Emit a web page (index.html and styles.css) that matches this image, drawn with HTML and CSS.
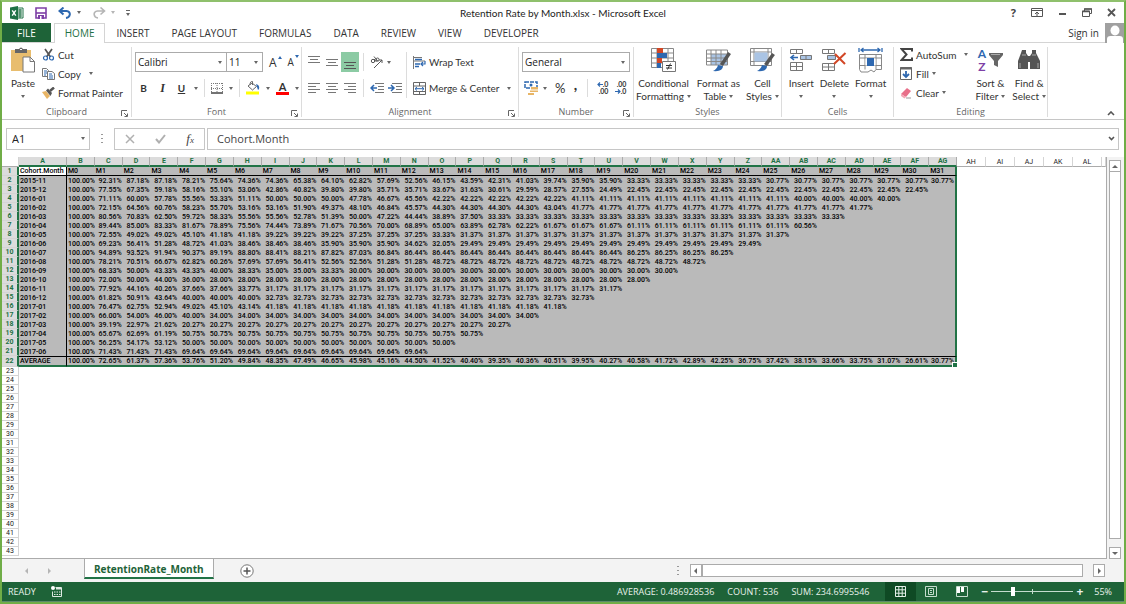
FILE: index.html
```html
<!DOCTYPE html>
<html lang="en">
<head>
  <meta charset="UTF-8">
  <meta name="viewport" content="width=device-width, initial-scale=1.0">
  <title>Retention Rate by Month.xlsx - Microsoft Excel</title>
  <link rel="stylesheet" href="styles.css">
</head>
<body>
  <div class="window">
    <header class="titlebar">
      <div class="quick-access">
        <svg width="14" height="14" viewBox="0 0 14 14"><path d="M7 2h6v10H7z" fill="#fff" stroke="#217346"/><path d="M8 4h4M8 6h4M8 8h4M8 10h4M10 3v9" stroke="#217346"/><path d="M0 1.500 8 0v14l-8-1.500z" fill="#1e7145"/><path d="m2.200 4.300 3.600 5.400M5.800 4.300 2.200 9.700" stroke="#fff" stroke-width="1.400"/></svg>
        <button aria-label="Save"><svg width="12" height="12" viewBox="0 0 12 12"><path d="M1 1h10v10H1z" fill="#fff" stroke="#7d3fa6" stroke-width="1.600"/><path d="M1 6h10" stroke="#7d3fa6" stroke-width="1.600"/><path d="M3 8h6v4H3z" fill="#7d3fa6"/><path d="M5 9h1.500v3H5z" fill="#fff"/></svg></button>
        <button aria-label="Undo"><svg width="14" height="12" viewBox="0 0 14 12"><path d="M5.500.500 1.500 4l4 3.500M2 4h6.500c5 .5 4 6.500-.5 7" fill="none" stroke="#2e68b0" stroke-width="2"/></svg><i class="arrow"></i></button>
        <button aria-label="Redo"><svg width="14" height="12" viewBox="0 0 14 12"><path d="m8.500.500 4 3.500-4 3.500M12 4H5.500C.5 4.500 1.500 10.500 6 11" fill="none" stroke="#b5b5b5" stroke-width="1.600"/></svg><i class="arrow faded"></i></button>
        <button class="customize" aria-label="Customize"><i class="arrow"></i></button>
      </div>
      <h1>Retention Rate by Month.xlsx - Microsoft Excel</h1>
      <div class="window-buttons">
        <button aria-label="Help"><b>?</b></button>
        <button aria-label="Ribbon display options"><svg width="12" height="9" viewBox="0 0 12 9"><path d="M.500.500h11v8H.500zM.500 2.500h11M6 8V4M4 6l2-2 2 2" fill="none" stroke="#555"/></svg></button>
        <button aria-label="Minimize"><svg width="9" height="9" viewBox="0 0 9 9"><path d="M1 6h7" stroke="#555" stroke-width="2"/></svg></button>
        <button aria-label="Restore"><svg width="10" height="9" viewBox="0 0 10 9"><path d="M2.500 3V1h7v4.500H7.500M.500 3h7v5.500h-7z" fill="none" stroke="#555"/><path d="M2 1h8M0 3.500h8" stroke="#555" stroke-width="1.500"/></svg></button>
        <button aria-label="Close"><svg width="9" height="9" viewBox="0 0 9 9"><path d="m1 1 7 7M8 1 1 8" stroke="#555" stroke-width="1.800"/></svg></button>
      </div>
    </header>

    <nav class="tabs">
      <a class="tab file" href="#">FILE</a>
      <a class="tab active" href="#">HOME</a>
      <a class="tab" href="#">INSERT</a>
      <a class="tab" href="#">PAGE LAYOUT</a>
      <a class="tab" href="#">FORMULAS</a>
      <a class="tab" href="#">DATA</a>
      <a class="tab" href="#">REVIEW</a>
      <a class="tab" href="#">VIEW</a>
      <a class="tab" href="#">DEVELOPER</a>
      <a class="sign-in" href="#">Sign in
        <svg width="19" height="20" viewBox="0 0 19 20"><path d="M0 0h19v20H0z" fill="#a0a0a0"/><ellipse cx="10" cy="7.500" rx="4.500" ry="5" fill="#fff"/><path d="M2 20v-4q0-3 3.500-3h9q3.500 0 3.500 3v4z" fill="#fff"/></svg>
      </a>
    </nav>

    <section class="ribbon">
      <div class="group clipboard">
        <div class="group-body">
          <button class="big">
            <svg width="24" height="26" viewBox="0 0 24 26"><path d="M0 3h20v21H0z" fill="#e8bd6e"/><path d="M4 2h4q2-3 4 0h4v4H4z" fill="#666"/><path d="M9 2h2v1H9z" fill="#fff"/><path d="M12 10h7l4.500 4.500V25H12z" fill="#fff" stroke="#777"/><path d="M19 10v4.500h4.500" fill="none" stroke="#777"/></svg>
            <span>Paste</span><i class="arrow"></i>
          </button>
          <div class="stack">
            <button><svg width="13" height="13" viewBox="0 0 13 13"><path d="m3 1 5.500 8M10 1 4.500 9" stroke="#555" stroke-width="1.700"/><circle cx="3.500" cy="10" r="2" fill="none" stroke="#2e68b0" stroke-width="1.200"/><circle cx="9.500" cy="10" r="2" fill="none" stroke="#2e68b0" stroke-width="1.200"/></svg>Cut</button>
            <button><svg width="13" height="12" viewBox="0 0 13 12"><path d="M.500.500h4l2 2v6h-6z" fill="#fff" stroke="#777"/><path d="M2 3h3M2 5h3M2 7h2" stroke="#2e68b0"/><path d="M5.500 3.500h4.500l2.500 2v6h-7z" fill="#fff" stroke="#777"/><path d="M7 6h3M7 8h4M7 10h4" stroke="#2e68b0"/></svg>Copy<i class="arrow spaced"></i></button>
            <button><svg width="13" height="12" viewBox="0 0 13 12"><path d="m0 5 4-1 4 5-3 3z" fill="#e8b566"/><path d="m4 3.500 2-2 4 4.500-1.500 3z" fill="#555"/><path d="m8 4 4-3.500" stroke="#555" stroke-width="2.500"/></svg>Format Painter</button>
          </div>
        </div>
        <footer>Clipboard<svg class="launcher" width="7" height="7" viewBox="0 0 7 7"><path d="M.500 6V.500H6M3 3l3 3M6.500 3.500v3h-3" fill="none" stroke="#666"/></svg></footer>
      </div>

      <div class="group font">
        <div class="group-body rows">
          <div class="row">
            <label class="combo font-name"><select aria-label="Font"><option>Calibri</option></select></label><label class="combo font-size"><select aria-label="Font size"><option>11</option></select></label>
            <button class="grow" aria-label="Increase font size">A<i class="mark up"></i></button>
            <button class="shrink" aria-label="Decrease font size">A<i class="mark down"></i></button>
          </div>
          <div class="row">
            <button class="letter"><b>B</b></button>
            <button class="letter"><em>I</em></button>
            <button class="letter"><u>U</u></button><i class="arrow"></i>
            <i class="divider"></i>
            <button aria-label="Borders"><svg width="12" height="11" viewBox="0 0 12 11"><path d="M.500 0v10M11.500 0v10M6 0v10M0 .500h12M0 5.500h12" stroke="#777" stroke-dasharray="1 1"/><path d="M0 10h12" stroke="#444" stroke-width="1.500"/></svg></button><i class="arrow"></i>
            <i class="divider"></i>
            <button aria-label="Fill color"><svg width="14" height="14" viewBox="0 0 14 14"><path d="m2 5 4-3 4.500 3.500L6.500 9z" fill="#fff" stroke="#666"/><path d="M4 4q0-4 2.500-3.500V4" fill="none" stroke="#666"/><path d="M10 3q4 1 3 5l-1 1-1-3z" fill="#2e68b0"/><path d="M0 10.500h13v3H0z" fill="#ffff00"/></svg></button><i class="arrow"></i>
            <button class="font-color" aria-label="Font color"><b>A</b></button><i class="arrow"></i>
          </div>
        </div>
        <footer>Font<svg class="launcher" width="7" height="7" viewBox="0 0 7 7"><path d="M.500 6V.500H6M3 3l3 3M6.500 3.500v3h-3" fill="none" stroke="#666"/></svg></footer>
      </div>

      <div class="group alignment">
        <div class="group-body">
          <div class="align-grid">
            <button aria-label="Top align"><svg width="12" height="14" viewBox="0 0 12 14"><path d="M0 1.500h12M2 4.500h8M0 7.500h12" stroke="#777"/></svg></button>
            <button aria-label="Middle align"><svg width="12" height="14" viewBox="0 0 12 14"><path d="M0 4.500h12M2 7.500h8M0 10.500h12" stroke="#777"/></svg></button>
            <button class="pressed" aria-label="Bottom align"><svg width="12" height="14" viewBox="0 0 12 14"><path d="M0 7.500h12M2 10.500h8M0 13.500h12" stroke="#555"/></svg></button>
            <i class="divider"></i>
            <button class="wide" aria-label="Orientation"><svg width="13" height="13" viewBox="0 0 13 13"><circle cx="3" cy="5" r="1.700" fill="none" stroke="#555"/><path d="m4 3 2.500 3M4 .500l4 5" stroke="#555"/><circle cx="7.500" cy="3.500" r="1.500" fill="none" stroke="#555"/><path d="m4 12 8-8M9 4h3v3" fill="none" stroke="#555"/></svg><i class="arrow"></i></button>
            <button aria-label="Align left"><svg width="12" height="11" viewBox="0 0 12 11"><path d="M0 .500h12M0 3.500h8M0 6.500h12M0 9.500h8" stroke="#777"/></svg></button>
            <button aria-label="Center"><svg width="12" height="11" viewBox="0 0 12 11"><path d="M0 .500h12M2 3.500h8M0 6.500h12M2 9.500h8" stroke="#777"/></svg></button>
            <button aria-label="Align right"><svg width="12" height="11" viewBox="0 0 12 11"><path d="M0 .500h12M4 3.500h8M0 6.500h12M4 9.500h8" stroke="#777"/></svg></button>
            <i class="divider"></i>
            <button aria-label="Decrease indent"><svg width="14" height="10" viewBox="0 0 14 10"><path d="M5 .500h9M8 3.500h6M8 6.500h6M5 9.500h9" stroke="#777"/><path d="M7 5H2M4 2 1 5l3 3" fill="none" stroke="#2e68b0" stroke-width="1.500"/></svg></button>
            <button aria-label="Increase indent"><svg width="14" height="10" viewBox="0 0 14 10"><path d="M4 .500h10M8 3.500h6M8 6.500h6M4 9.500h10" stroke="#777"/><path d="M0 5h5M3 2l3 3-3 3" fill="none" stroke="#2e68b0" stroke-width="1.500"/></svg></button>
          </div>
          <i class="divider tall"></i>
          <div class="wrap-stack">
            <button><svg width="13" height="13" viewBox="0 0 13 13"><path d="M.500 0v13M1 1.500h8M1 5h11" stroke="#777"/><path d="M2 3.500h7M2 8h5M2 10.500h4" stroke="#2e68b0" stroke-width="1.400"/><path d="M12 5v3H8M10 6 8 8l2 2" fill="none" stroke="#2e68b0" stroke-width="1.200"/></svg>Wrap Text</button>
            <button><svg width="13" height="13" viewBox="0 0 13 13"><path d="M.500.500h12v12H.500zM.500 4h12M.500 9.500h12M6.500.500V4M6.500 9.500v3" fill="none" stroke="#666"/><path d="M2 6.700h9M4 5 2 6.700 4 8.500M9 5l2 1.700L9 8.500" fill="none" stroke="#2e68b0"/></svg>Merge &amp; Center<i class="arrow spaced"></i></button>
          </div>
        </div>
        <footer>Alignment<svg class="launcher" width="7" height="7" viewBox="0 0 7 7"><path d="M.500 6V.500H6M3 3l3 3M6.500 3.500v3h-3" fill="none" stroke="#666"/></svg></footer>
      </div>

      <div class="group number">
        <div class="group-body rows">
          <div class="row"><label class="combo format"><select aria-label="Number format"><option>General</option></select></label></div>
          <div class="row number-row">
            <button aria-label="Accounting format"><svg width="15" height="14" viewBox="0 0 15 14"><path d="M1 1h12v6H1z" fill="#fff" stroke="#2e68b0" stroke-width="1.500" stroke-dasharray="4 1"/><circle cx="7" cy="4" r="1.500" fill="#2e68b0"/><path d="M7 6h7v2.500H7zM6 9.500h8V11H6zM4 12h6v2H4z" fill="#e8b566"/></svg></button><i class="arrow"></i>
            <button class="percent">%</button>
            <button class="comma" aria-label="Comma style"><b>,</b></button>
            <i class="divider"></i>
            <button class="decimal" aria-label="Increase decimal"><span><svg width="6" height="5" viewBox="0 0 6 5"><path d="M6 2.500H1M3 .500l-2 2 2 2" fill="none" stroke="#2e68b0" stroke-width="1.200"/></svg>.0</span><span>.00</span></button>
            <button class="decimal" aria-label="Decrease decimal"><span>.00</span><span><svg width="6" height="5" viewBox="0 0 6 5"><path d="M0 2.500h5M3 .500l2 2-2 2" fill="none" stroke="#2e68b0" stroke-width="1.200"/></svg>.0</span></button>
          </div>
        </div>
        <footer>Number<svg class="launcher" width="7" height="7" viewBox="0 0 7 7"><path d="M.500 6V.500H6M3 3l3 3M6.500 3.500v3h-3" fill="none" stroke="#666"/></svg></footer>
      </div>

      <div class="group styles">
        <div class="group-body">
          <button class="big"><svg width="26" height="26" viewBox="0 0 26 26"><path d="M1.500 1.500h22v19h-22zM1.500 6h22M1.500 11h22M1.500 16h22M7 1.500v19M18 1.500v19" fill="#fff" stroke="#888"/><path d="M7 1h6v5H7zM7 11h5v5H7z" fill="#d24726"/><path d="M7 6h10v5H7zM7 16h4v5H7z" fill="#2e68b0"/><path d="M12.500 14.500h13v10h-13z" fill="#fff" stroke="#777"/><path d="M16 18.500h6M16 21h6M20.500 16.500l-3 6" stroke="#333"/></svg><span>Conditional</span><span>Formatting<i class="arrow"></i></span></button>
          <button class="big"><svg width="26" height="26" viewBox="0 0 26 26"><path d="M1.500 3h21v15h-21z" fill="#fff"/><path d="M6 7h16v11H6z" fill="#aac4e4"/><path d="M1.500 3h21v15h-21zM1.500 7h21M1.500 11h21M1.500 14.500h21M6 3v15M11 3v15M16 3v15" fill="none" stroke="#888"/><path d="m24.500 6-8 12" stroke="#555" stroke-width="3.500"/><path d="M8 24q4-2 5-6l5 1q0 6-10 5z" fill="#2e68b0"/></svg><span>Format as</span><span>Table<i class="arrow"></i></span></button>
          <button class="big"><svg width="26" height="26" viewBox="0 0 26 26"><path d="M1.500 1.500h21v17h-21zM1.500 5h21M1.500 14.500h21M5 1.500v17M19 1.500v17" fill="#fff" stroke="#888"/><path d="M5.500 5.500h13v9h-13z" fill="#aac4e4"/><path d="m24.500 7-8 11" stroke="#555" stroke-width="3.500"/><path d="M8 24q4-2 5-6l5 1q0 6-10 5z" fill="#2e68b0"/></svg><span>Cell</span><span>Styles<i class="arrow"></i></span></button>
        </div>
        <footer>Styles</footer>
      </div>

      <div class="group cells">
        <div class="group-body">
          <button class="big"><svg width="24" height="26" viewBox="0 0 24 26"><path d="M1.500 2.500h12v4h-12zM7.500 2.500v4M1.500 15.500h12v8h-12zM1.500 19.500h12M7.500 15.500v8" fill="#fff" stroke="#777"/><path d="M11.500 8.500h11v4h-11zM17 8.500v4" fill="#aac4e4" stroke="#777"/><path d="M9 10.500H3M5 8 2 10.500 5 13" fill="none" stroke="#2e68b0" stroke-width="1.600"/></svg><span>Insert</span><i class="arrow"></i></button>
          <button class="big"><svg width="26" height="26" viewBox="0 0 26 26"><path d="M1.500 2.500h12v4h-12zM7.500 2.500v4M1.500 16.500h12v7h-12zM1.500 20h12M7.500 16.500v7" fill="#fff" stroke="#777"/><path d="M6.500 8.500h8v4h-8z" fill="#aac4e4" stroke="#777"/><path d="m14 7 10 10M24.500 6 13 17" stroke="#d24726" stroke-width="2"/></svg><span>Delete</span><i class="arrow"></i></button>
          <button class="big"><svg width="26" height="26" viewBox="0 0 26 26"><path d="M1 1v4M24 1v4M3 3h19M5.500 1 3 3l2.500 2M19.500 1 22 3l-2.500 2" fill="none" stroke="#2e68b0" stroke-width="1.300"/><path d="M1.500 7.500h22v15H18l-2 2.500-3-2-3 2H3l-1.500-2.500zM1.500 11h22M1.500 18.500h22M7 7.500v15M18 7.500v15" fill="#fff" stroke="#888"/><path d="M7.500 11.500h10v7h-10z" fill="#fff"/><path d="M9 11h7v8H9z" fill="#2e68b0"/></svg><span>Format</span><i class="arrow"></i></button>
        </div>
        <footer>Cells</footer>
      </div>

      <div class="group editing">
        <div class="group-body">
          <div class="stack">
            <button><svg width="13" height="13" viewBox="0 0 13 13"><path d="M12 3.500V1H1.500l5 5.500-5 5.500H12V9.500" fill="none" stroke="#444" stroke-width="2"/></svg>AutoSum<i class="arrow spaced"></i></button>
            <button><svg width="13" height="13" viewBox="0 0 13 13"><path d="M.500.500h11v12H.500z" fill="#fff" stroke="#666"/><path d="M0 1.500h12" stroke="#666" stroke-width="2"/><path d="M6 4v6M3 7l3 3 3-3" fill="none" stroke="#2e68b0" stroke-width="1.800"/></svg>Fill<i class="arrow"></i></button>
            <button><svg width="13" height="12" viewBox="0 0 13 12"><path d="m7 1 4 3-5 6-5-3z" fill="#e8708a"/><path d="m1 7 5 3-1.500 1.500L1 9z" fill="#f3a6b5"/><path d="M6 11h5" stroke="#999"/></svg>Clear<i class="arrow"></i></button>
          </div>
          <button class="big"><span class="sort-icon"><span><b>A</b><b>Z</b></span><svg width="14" height="14" viewBox="0 0 14 14"><path d="M0 0h14v2L9 8v6l-4-2V8L0 2z" fill="#666"/><path d="M2 1.500h9" stroke="#aaa"/></svg></span><span>Sort &amp;</span><span>Filter<i class="arrow"></i></span></button>
          <button class="big"><svg width="24" height="26" viewBox="0 0 24 26"><path d="M5 3h4v3l2 3v13H1V14L4 6zM15 3h4v3l4 8v8H13V9l2-3z" fill="#555"/><path d="M10 9h4v6h-4z" fill="#555"/><path d="M3 16v5M21 16v5M5 8h4M15 8h4" stroke="#aaa"/></svg><span>Find &amp;</span><span>Select<i class="arrow"></i></span></button>
        </div>
        <footer>Editing</footer>
      </div>
      <button class="collapse" aria-label="Collapse the ribbon"><svg width="8" height="5" viewBox="0 0 8 5"><path d="m1 4 3-3 3 3" fill="none" stroke="#555" stroke-width="1.600"/></svg></button>
    </section>

    <section class="formula-bar">
      <label class="combo name-box"><select aria-label="Name box"><option>A1</option></select></label>
      <span class="grip"></span>
      <div class="formula-buttons">
        <button aria-label="Cancel"><svg width="10" height="10" viewBox="0 0 10 10"><path d="m1 1 8 8M9 1 1 9" stroke="#b0b0b0" stroke-width="1.500"/></svg></button>
        <button aria-label="Enter"><svg width="11" height="10" viewBox="0 0 11 10"><path d="m1 5 3 3.500L10 1" fill="none" stroke="#b0b0b0" stroke-width="2"/></svg></button>
        <button class="fx" aria-label="Insert function"><em>f<small>x</small></em></button>
      </div>
      <div class="formula-input">
        <input type="text" aria-label="Formula" value="Cohort.Month">
        <button aria-label="Expand"><svg width="7" height="5" viewBox="0 0 7 5"><path d="m1 1 2.500 2.500L6 1" fill="none" stroke="#555" stroke-width="1.600"/></svg></button>
      </div>
    </section>

    <main class="workspace">
      <div class="sheet">
        <table class="grid">
          <colgroup id="cols"></colgroup>
          <thead id="head"></thead>
          <tbody id="body"></tbody>
        </table>
      </div>
      <div class="scroll vertical">
        <button aria-label="Scroll up"><i class="tri up"></i></button>
        <div class="thumb"></div>
        <button aria-label="Scroll down"><i class="tri down"></i></button>
      </div>
    </main>

    <div class="sheet-bar">
      <div class="sheet-nav">
        <button aria-label="Previous sheet"><i class="tri left"></i></button>
        <button aria-label="Next sheet"><i class="tri right"></i></button>
      </div>
      <a class="sheet-tab" href="#">RetentionRate_Month</a>
      <button class="add-sheet" aria-label="New sheet"><svg width="14" height="14" viewBox="0 0 14 14"><circle cx="7" cy="7" r="6.200" fill="#fff" stroke="#777"/><path d="M7 3.500v7M3.500 7h7" stroke="#555" stroke-width="1.500"/></svg></button>
      <span class="grip"></span>
      <div class="scroll horizontal">
        <button aria-label="Scroll left"><i class="tri left"></i></button>
        <div class="thumb"></div>
        <button aria-label="Scroll right"><i class="tri right"></i></button>
      </div>
    </div>

    <footer class="status">
      <span>READY</span>
      <svg class="macro" width="11" height="11" viewBox="0 0 11 11"><path d="M4.500 1.500h6v9h-9v-5" fill="none" stroke="#dfeae3"/><path d="M5 2h5v1.500H5z" fill="#dfeae3"/><path d="M3 6h1.500M5.500 6H7M8 6h1.500M3 8.500h1.500M5.500 8.500H7M8 8.500h1.500" stroke="#dfeae3"/><circle cx="2" cy="2" r="2" fill="#fff"/></svg>
      <div class="totals">
        <span>AVERAGE: 0.486928536</span>
        <span>COUNT: 536</span>
        <span>SUM: 234.6995546</span>
      </div>
      <div class="views">
        <button class="on" aria-label="Normal"><svg width="11" height="11" viewBox="0 0 11 11"><path d="M.500.500h10v10H.500zM.500 3.800h10M.500 7.200h10M3.800.500v10M7.200.500v10" fill="none" stroke="#e4efe8"/></svg></button>
        <button aria-label="Page layout"><svg width="12" height="11" viewBox="0 0 12 11"><path d="M.500.500h11v10H.500zM3.500 2.500h5v6h-5zM5 4.500h2M5 6.500h2" fill="none" stroke="#c4dccd"/></svg></button>
        <button aria-label="Page break preview"><svg width="12" height="11" viewBox="0 0 12 11"><path d="M.500.500h11v10H.500z" fill="none" stroke="#c4dccd"/><path d="M1 1h3v6H1zM5 1h3v5H5z" fill="#fff"/></svg></button>
      </div>
      <div class="zoom">
        <button aria-label="Zoom out">−</button>
        <input type="range" aria-label="Zoom" min="0" max="100" value="25">
        <button aria-label="Zoom in">+</button>
        <span>55%</span>
      </div>
    </footer>
  </div>
  <script src="script.js"></script>
</body>
</html>
```

FILE: styles.css
```css
* {
    box-sizing: border-box;
}

body {
    margin: 0;
    font-family: "Open Sans", "Noto Sans", sans-serif;
    font-size: 11px;
    color: #444444;
}

button, select, input {
    font: inherit;
    color: inherit;
}

button {
    display: flex;
    align-items: center;
    justify-content: center;
    padding: 0;
    border: none;
    background: none;
    cursor: pointer;
}

a {
    color: inherit;
    text-decoration: none;
}

svg {
    display: block;
    flex: none;
}

.window {
    display: flex;
    flex-direction: column;
    height: 100vh;
    border: 2px solid #70ad47;
    border-top-color: #8fc06c;
    background-color: #ffffff;
}

.arrow {
    flex: none;
    width: 0;
    border: 2px solid transparent;
    border-top: 3px solid #666666;
    border-bottom: none;
}

.arrow.faded {
    border-top-color: #b5b5b5;
}

.divider {
    width: 1px;
    height: 18px;
    background-color: #dcdcdc;
}

/* title bar */
.titlebar {
    display: grid;
    grid-template-columns: 1fr auto 1fr;
    align-items: center;
    height: 21px;
}

.titlebar h1 {
    margin: 0;
    font-family: Lato, sans-serif;
    font-size: 10px;
    font-weight: normal;
    color: #222222;
}

.quick-access {
    display: flex;
    align-items: center;
    gap: 11px;
    padding-left: 8px;
}

.quick-access button {
    gap: 5px;
}

.customize {
    padding-top: 2px;
    border-top: 1px solid #666666;
}

.window-buttons {
    display: flex;
    justify-content: flex-end;
    gap: 15px;
    padding-right: 8px;
}

/* ribbon tabs */
.tabs {
    display: flex;
    height: 20px;
    border-bottom: 1px solid #d4d4d4;
    font-size: 10px;
    line-height: 20px;
    color: #333333;
}

.tab {
    padding: 0 11px;
}

.tab.file {
    padding: 0 15px;
    margin-right: 3px;
    background-color: #1e6338;
    color: #ffffff;
}

.tab.active {
    padding: 0 10px;
    height: 20px;
    border: 1px solid #d4d4d4;
    border-bottom: none;
    background-color: #ffffff;
    color: #1e7145;
    line-height: 18px;
}

.sign-in {
    display: flex;
    gap: 6px;
    margin-left: auto;
}

/* ribbon */
.ribbon {
    display: flex;
    height: 77px;
    padding: 4px 0 2px;
    border-bottom: 1px solid #c6c6c6;
    font-family: Lato, sans-serif;
    font-size: 10px;
    color: #333333;
}

.group {
    display: flex;
    flex-direction: column;
    border-right: 1px solid #dcdcdc;
}

.group-body {
    display: flex;
    flex: 1;
}

.group footer {
    display: flex;
    align-items: center;
    justify-content: center;
    position: relative;
    height: 10px;
    font-family: "Open Sans", sans-serif;
    font-size: 9px;
    line-height: 10px;
    color: #666666;
}

.launcher {
    position: absolute;
    right: 3px;
    bottom: 0;
}

.big {
    flex-direction: column;
    justify-content: flex-start;
    line-height: 13px;
}

.big > svg, .sort-icon {
    height: 26px;
    margin-bottom: 4px;
}

.big > span {
    display: flex;
    align-items: center;
    gap: 3px;
    white-space: nowrap;
}

.big > .arrow {
    margin-top: 5px;
}

.stack {
    display: flex;
    flex-direction: column;
    gap: 4px;
}

.stack button {
    justify-content: flex-start;
    gap: 3px;
    height: 15px;
    white-space: nowrap;
}

.spaced {
    margin-left: 5px;
}

.group-body.rows {
    flex-direction: column;
    gap: 6px;
    padding-top: 5px;
}

.row {
    display: flex;
    align-items: center;
    height: 20px;
}

.combo {
    display: block;
    position: relative;
    height: 20px;
    border: 1px solid #ababab;
}

.combo select {
    width: 100%;
    height: 100%;
    padding: 0 2px;
    border: none;
    background: none;
    appearance: none;
    font-family: "Open Sans", sans-serif;
    color: #222222;
}

.combo::after {
    content: "";
    position: absolute;
    top: 8px;
    right: 4px;
    border: 2px solid transparent;
    border-top: 3px solid #666666;
    border-bottom: none;
    pointer-events: none;
}

.clipboard {
    width: 130px;
}

.clipboard .group-body {
    gap: 7px;
    padding-left: 9px;
}

.font {
    width: 170px;
}

.font .group-body {
    padding-left: 3px;
}

.font .row {
    gap: 6px;
}

.font-name {
    width: 92px;
}

.font-size {
    width: 37px;
    margin-left: -7px;
}

.grow, .shrink {
    gap: 1px;
    font-family: "Open Sans", sans-serif;
    font-size: 12px;
}

.shrink {
    font-size: 10px;
}

.mark {
    align-self: flex-start;
    border: 2px solid transparent;
}

.mark.up {
    margin-top: 2px;
    border-bottom: 3px solid #2e68b0;
    border-top: none;
}

.mark.down {
    border-top: 3px solid #2e68b0;
    border-bottom: none;
}

.letter {
    width: 13px;
}

.letter em {
    font-family: "Liberation Serif", serif;
    font-size: 12px;
    font-weight: bold;
}

.letter u {
    font-weight: bold;
}

.font .letter:first-child {
    margin-left: 2px;
}

.font-color {
    width: 13px;
    height: 14px;
    border-bottom: 3px solid #ff0000;
    font-size: 11px;
    line-height: 11px;
}

.alignment {
    width: 217px;
}

.alignment .group-body {
    padding: 5px 0 0 3px;
}

.align-grid {
    display: grid;
    grid-template-columns: 18px 18px 18px 9px 18px 18px;
    grid-template-rows: 20px 20px;
    row-gap: 6px;
    align-items: center;
    justify-items: center;
}

.align-grid .wide {
    grid-column: span 2;
    justify-self: start;
    gap: 4px;
    padding-left: 2px;
}

.pressed {
    width: 18px;
    height: 20px;
    background-color: #8ccba4;
}

.divider.tall {
    height: 46px;
    margin: 0 6px 0 2px;
}

.wrap-stack {
    display: flex;
    flex-direction: column;
    gap: 6px;
}

.wrap-stack button {
    justify-content: flex-start;
    gap: 3px;
    height: 20px;
    white-space: nowrap;
}

.number {
    width: 115px;
}

.number .group-body {
    padding-left: 3px;
}

.format {
    width: 108px;
}

.number-row {
    gap: 4px;
    padding-left: 2px;
}

.percent {
    margin-left: 4px;
    font-size: 13px;
}

.comma {
    width: 12px;
    height: 20px;
    padding-bottom: 8px;
    font-size: 15px;
}

.number-row .divider {
    margin: 0 2px;
}

.decimal {
    flex-direction: column;
    align-items: flex-end;
    width: 14px;
    font-size: 7px;
    font-weight: bold;
    line-height: 7px;
}

.decimal span {
    display: flex;
    align-items: center;
}

.styles {
    width: 148px;
}

.styles .group-body {
    justify-content: center;
    gap: 6px;
}

.cells {
    width: 112px;
}

.cells .group-body {
    justify-content: center;
    gap: 6px;
}

.editing {
    width: 154px;
}

.editing .group-body {
    gap: 7px;
    padding-left: 6px;
}

.sort-icon {
    align-items: center;
}

.sort-icon > span {
    display: flex;
    flex-direction: column;
    color: #2e68b0;
    font-size: 12px;
    line-height: 13px;
}

.sort-icon b + b {
    color: #7d3fa6;
}

.collapse {
    align-self: flex-end;
    margin: 0 9px 1px auto;
}

/* formula bar */
.formula-bar {
    display: flex;
    align-items: center;
    height: 37px;
    padding: 0 5px 0 4px;
    font-size: 11px;
}

.formula-bar .combo {
    width: 84px;
    height: 22px;
    border-color: #c6c6c6;
}

.formula-bar .combo select {
    padding: 0 5px;
}

.grip {
    width: 2px;
    height: 10px;
    margin: 0 11px;
    background: repeating-linear-gradient(#999999 0 1px, transparent 1px 4px);
}

.formula-buttons {
    display: flex;
    align-items: center;
    justify-content: space-around;
    width: 91px;
    height: 22px;
    margin-right: 2px;
    border: 1px solid #c6c6c6;
}

.fx {
    font-family: "Liberation Serif", serif;
    font-size: 13px;
}

.fx small {
    font-size: 9px;
}

.formula-input {
    display: flex;
    flex: 1;
    height: 22px;
    padding-right: 3px;
    border: 1px solid #c6c6c6;
}

.formula-input input {
    flex: 1;
    padding: 0 9px;
    border: none;
    outline: none;
}

/* worksheet */
.workspace {
    display: flex;
    flex: 1;
    min-height: 0;
    background-color: #f3f3f3;
}

.sheet {
    flex: 1;
    overflow: hidden;
    border-right: 1px solid #ababab;
    border-bottom: 1px solid #ababab;
    background-color: #ffffff;
}

.grid {
    width: 100%;
    table-layout: fixed;
    border-collapse: separate;
    border-spacing: 0;
    font-family: Roboto, sans-serif;
    font-size: 7px;
    font-weight: 500;
    line-height: 8px;
    color: #000000;
}

.grid th, .grid td {
    height: 9px;
    padding: 0;
    overflow: hidden;
    white-space: nowrap;
}

.col-row {
    width: 17px;
}

.col-month {
    width: 48px;
}

.col-blank {
    width: 29px;
}

.col-rest {
    width: 4px;
}

.grid th {
    border-right: 1px solid #d4d4d4;
    font-weight: normal;
    text-align: center;
    color: #222222;
}

.grid thead th {
    height: 10px;
    border-bottom: 1px solid #ababab;
}

.grid tbody th {
    border-bottom: 1px solid #d4d4d4;
    line-height: 8px;
}

.grid thead th.selected {
    border-right-color: #ababab;
    border-bottom: 2px solid #217346;
}

.grid th.selected {
    background-color: #dcdcdc;
    font-weight: bold;
    color: #1e7145;
}

.grid tbody th.selected {
    border-right: 2px solid #217346;
}

.grid td {
    text-align: right;
}

.grid td.selected {
    padding: 0 1px;
    background-color: #bababa;
}

.grid .names td.selected {
    border-bottom: 1px solid #000000;
    text-align: left;
}

.grid td.selected.month {
    border-right: 1px solid #000000;
    text-align: left;
}

.grid td.selected.current {
    background-color: #ffffff;
}

.grid .average > * {
    height: 11px;
}

.grid .average td.selected {
    border-top: 1px solid #000000;
    border-bottom: 2px solid #217346;
}

.grid td.edge {
    border-right: 2px solid #217346;
}

.grid .average td.edge {
    position: relative;
    overflow: visible;
}

.average td.edge::after {
    content: "";
    position: absolute;
    right: -3px;
    bottom: -3px;
    width: 4px;
    height: 4px;
    border: 1px solid #ffffff;
    box-sizing: content-box;
    background-color: #217346;
}

/* scroll bars */
.scroll {
    display: flex;
}

.scroll button {
    flex: none;
    width: 12px;
    height: 12px;
    border: 1px solid #ababab;
    background-color: #ffffff;
}

.scroll .thumb {
    flex: 1;
    border: 1px solid #ababab;
    background-color: #ffffff;
}

.scroll.vertical {
    flex-direction: column;
    width: 17px;
    padding: 3px 3px 0 2px;
}

.vertical .thumb {
    margin-bottom: 8px;
    border-top: none;
}

.scroll.horizontal {
    width: 37%;
    height: 13px;
    margin-right: 19px;
}

.horizontal button {
    height: 13px;
}

.horizontal .thumb {
    margin-right: 10px;
}

.tri {
    border: 3px solid transparent;
}

.tri.up {
    border-top: none;
    border-bottom-color: #666666;
}

.tri.down {
    border-bottom: none;
    border-top-color: #666666;
}

.tri.left {
    border-left: none;
    border-right-color: #666666;
}

.tri.right {
    border-right: none;
    border-left-color: #666666;
}

/* sheet tabs */
.sheet-bar {
    display: flex;
    align-items: center;
    height: 23px;
    background-color: #f3f3f3;
}

.sheet-nav {
    display: flex;
    justify-content: center;
    gap: 20px;
    width: 82px;
    padding-right: 10px;
}

.sheet-nav .left {
    border-right-color: #b5b5b5;
}

.sheet-nav .right {
    border-left-color: #b5b5b5;
}

.sheet-tab {
    align-self: flex-start;
    height: 20px;
    padding: 0 9px;
    border: 1px solid #ababab;
    border-top: none;
    border-bottom: 2px solid #217346;
    background-color: #ffffff;
    color: #1e6338;
    font-size: 10px;
    font-weight: bold;
    line-height: 20px;
}

.add-sheet {
    margin: 0 auto 0 26px;
}

/* status bar */
.status {
    display: flex;
    align-items: center;
    height: 20px;
    padding: 0 12px 0 6px;
    border-bottom: 1px solid #5d8a6c;
    background-color: #1e6338;
    color: #e8f1eb;
    font-size: 9px;
}

.macro {
    margin-left: 15px;
}

.totals {
    display: flex;
    gap: 13px;
    margin-left: auto;
}

.views {
    display: flex;
    align-self: stretch;
    margin-left: 15px;
}

.views button {
    width: 31px;
}

.views .on {
    background-color: #0f4a24;
}

.zoom {
    display: flex;
    align-items: center;
    gap: 3px;
    margin-left: 4px;
}

.zoom button {
    font-size: 12px;
    font-weight: bold;
}

.zoom span {
    margin-left: 8px;
}

.zoom input {
    width: 82px;
    height: 12px;
    margin: 0;
    appearance: none;
    background:
        linear-gradient(#c4dccd, #c4dccd) center / 1px 5px no-repeat,
        linear-gradient(#c4dccd, #c4dccd) center / 100% 1px no-repeat;
}

.zoom input::-webkit-slider-thumb {
    appearance: none;
    width: 4px;
    height: 9px;
    background-color: #ffffff;
}
```

FILE: script.js
```js
// Retention percentages per cohort, "value*n" repeats a value n times
const cohorts = [
  ['2015-11', '100.00 92.31 87.18*2 78.21 75.64 74.36*2 65.38 64.10 62.82 57.69 52.56 46.15 43.59 42.31 41.03 39.74 35.90*2 33.33*5 30.77*7'],
  ['2015-12', '100.00 77.55 67.35 59.18 58.16 55.10 53.06 42.86 40.82 39.80*2 35.71*2 33.67 31.63 30.61 29.59 28.57 27.55 24.49 22.45*11'],
  ['2016-01', '100.00 71.11 60.00 57.78 55.56 53.33 51.11 50.00*3 47.78 46.67 45.56 42.22*5 41.11*8 40.00*4'],
  ['2016-02', '100.00 72.15 64.56 60.76 58.23 55.70 53.16*2 51.90 49.37 48.10 46.84 45.57 44.30*4 43.04 41.77*11'],
  ['2016-03', '100.00 80.56 70.83 62.50 59.72 58.33 55.56*2 52.78 51.39 50.00 47.22 44.44 38.89 37.50 33.33*13'],
  ['2016-04', '100.00 89.44 85.00 83.33 81.67 78.89 75.56 74.44 73.89 71.67 70.56 70.00 68.89 65.00 63.89 62.78 62.22 61.67*3 61.11*6 60.56'],
  ['2016-05', '100.00 72.55 49.02*2 45.10 41.18*2 39.22*3 37.25*3 33.33 31.37*12'],
  ['2016-06', '100.00 69.23 56.41 51.28 48.72 41.03 38.46*3 35.90*3 34.62 32.05 29.49*11'],
  ['2016-07', '100.00 94.89 93.52 91.94 90.37 89.19 88.80 88.41 88.21 87.82 87.03 86.84 86.44*8 86.25*4'],
  ['2016-08', '100.00 78.21 70.51 66.67 62.82 60.26 57.69*2 56.41 52.56*2 51.28*2 48.72*10'],
  ['2016-09', '100.00 68.33 50.00 43.33*2 40.00 38.33 35.00*2 33.33 30.00*12'],
  ['2016-10', '100.00 72.00 50.00 44.00 36.00 28.00*16'],
  ['2016-11', '100.00 77.92 44.16 40.26 37.66*2 33.77 31.17*13'],
  ['2016-12', '100.00 61.82 50.91 43.64 40.00*3 32.73*12'],
  ['2017-01', '100.00 76.47 62.75 52.94 49.02 45.10 43.14 41.18*11'],
  ['2017-02', '100.00 66.00 54.00 46.00 40.00 34.00*12'],
  ['2017-03', '100.00 39.19 22.97 21.62 20.27*12'],
  ['2017-04', '100.00 65.67 62.69 61.19 50.75*11'],
  ['2017-05', '100.00 56.25 54.17 53.12 50.00*10'],
  ['2017-06', '100.00 71.43*3 69.64*9'],
  ['AVERAGE', '100.00 72.65 61.37 57.36 53.76 51.20 49.84 48.35 47.49 46.65 45.98 45.16 44.50 41.52 40.40 39.35 40.36 40.51 39.95 40.27 40.58 41.72 42.89 42.25 36.75 37.42 38.15 33.66 33.75 31.07 26.61 30.77']
];

const COLUMNS = 38;
const SELECTED = 33;
const ROWS = 43;

function columnName(i) {
  const letter = String.fromCharCode(65 + i % 26);
  return i < 26 ? letter : 'A' + letter;
}

function expand(text) {
  return text.split(' ').flatMap(part => {
    const [value, times] = part.split('*');
    return Array(Number(times || 1)).fill(value + '%');
  });
}

const rows = [['Cohort.Month', ...Array.from({ length: 32 }, (_, i) => 'M' + i)]];
cohorts.forEach(([month, values]) => rows.push([month, ...expand(values)]));

let cols = '<col class="col-row">';
let head = '<tr><th></th>';
for (let c = 0; c < COLUMNS; c++) {
  const type = c === 0 ? 'col-month' : c < SELECTED ? 'col-data' : 'col-blank';
  cols += `<col class="${type}">`;
  head += `<th class="${c < SELECTED ? 'selected' : ''}">${columnName(c)}</th>`;
}
document.getElementById('cols').innerHTML = cols + '<col class="col-rest">';
document.getElementById('head').innerHTML = head + '<th></th></tr>';

let body = '';
for (let r = 0; r < ROWS; r++) {
  const row = rows[r];
  const rowClass = r === 0 ? 'names' : r === rows.length - 1 ? 'average' : '';
  body += `<tr class="${rowClass}"><th class="${row ? 'selected' : ''}">${r + 1}</th>`;
  if (row) {
    for (let c = 0; c < SELECTED; c++) {
      let cls = 'selected';
      if (c === 0) cls += ' month';
      if (c === 0 && r === 0) cls += ' current';
      if (c === SELECTED - 1) cls += ' edge';
      body += `<td class="${cls}">${row[c] || ''}</td>`;
    }
    body += `<td colspan="${COLUMNS - SELECTED + 1}"></td>`;
  } else {
    body += `<td colspan="${COLUMNS + 1}"></td>`;
  }
  body += '</tr>';
}
document.getElementById('body').innerHTML = body;
```
